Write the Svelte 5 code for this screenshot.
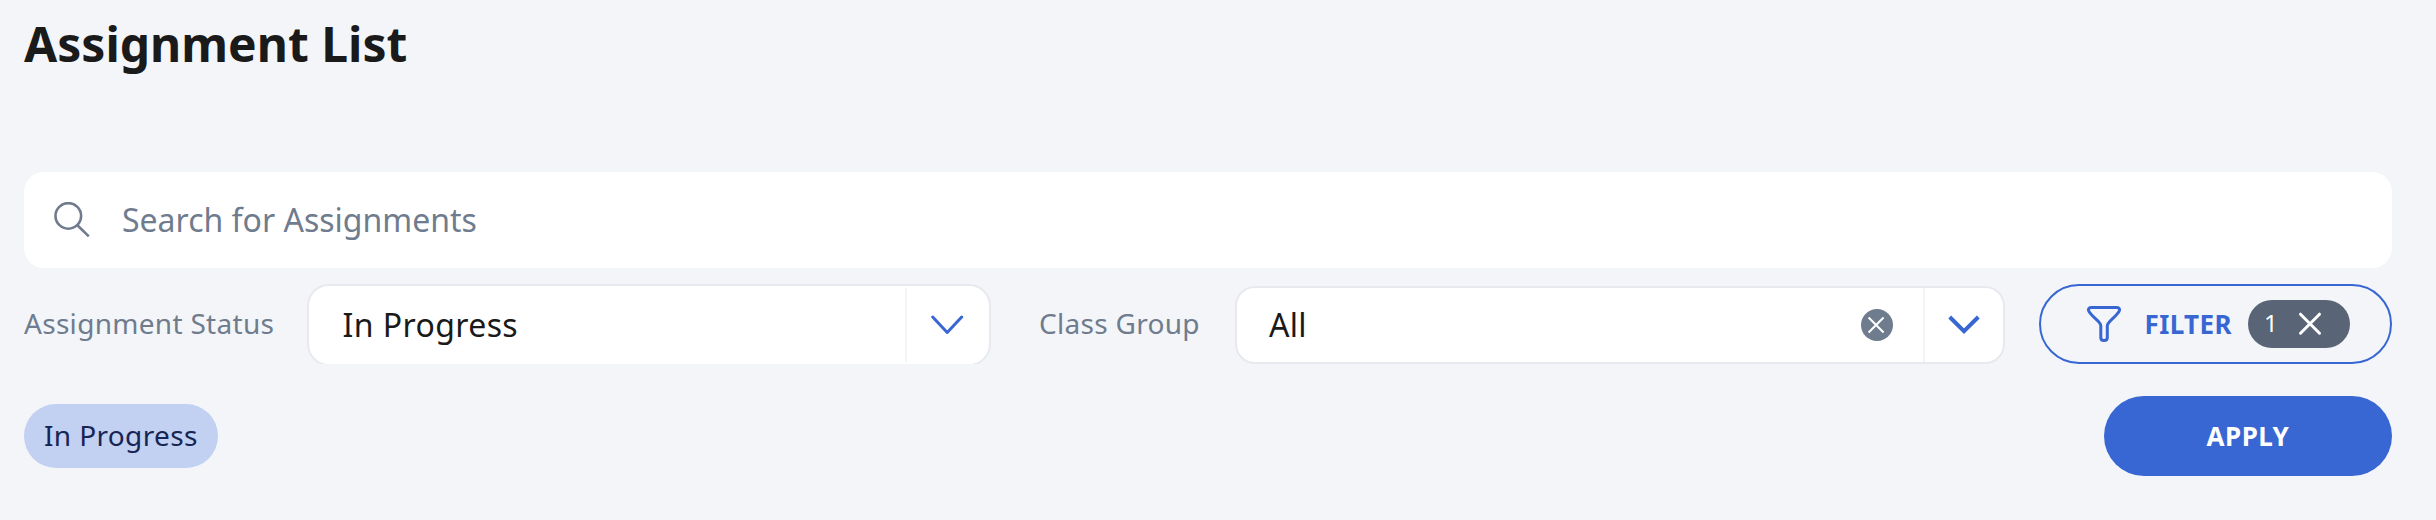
<script>
  let query = $state('');
  const status = 'In Progress';
  const group = 'All';
  const filterCount = 1;
</script>

<main>
  <h1>Assignment List</h1>

  <label class="search">
    <svg width="36" height="36" viewBox="0 0 36 36" fill="none" stroke="#6f7c8e" stroke-width="2.6">
      <circle cx="14.3" cy="13.9" r="12.8" />
      <path d="M23.4 23.2L34.8 34.4" />
    </svg>
    <input bind:value={query} placeholder="Search for Assignments" />
  </label>

  <div class="filters">
    <span class="label status-label">Assignment Status</span>
    <div class="clip">
      <div class="select">
        <span class="value">{status}</span>
        <span class="toggle">
          <svg width="34" height="22" viewBox="0 0 34 22" fill="none" stroke="#3866d2" stroke-width="3" stroke-linecap="round" stroke-linejoin="round">
            <path d="M1.7 3L16.2 18.5L30.7 3" />
          </svg>
        </span>
      </div>
    </div>

    <span class="label group-label">Class Group</span>
    <div class="select group">
      <span class="value">{group}</span>
      <svg class="clear" width="32" height="32" viewBox="0 0 32 32">
        <circle cx="16" cy="16" r="16" fill="#6f7c8e" />
        <path d="M7.6 8.5L22.6 23.5M22.6 8.5L7.6 23.5" stroke="#fff" stroke-width="2" />
      </svg>
      <span class="toggle">
        <svg width="34" height="22" viewBox="0 0 34 22" fill="none" stroke="#3866d2" stroke-width="4">
          <path d="M2.7 3L17 17.2L31.3 3" />
        </svg>
      </span>
    </div>

    <button class="filter">
      <svg width="36" height="38" viewBox="0 0 36 38" fill="none" stroke="#3866d2" stroke-width="3" stroke-linejoin="round">
        <path d="M5 2.600H31C33.300 2.600 34.200 4.200 33.200 6.200C30.500 11.800 21.300 16.500 21.300 20.800V32.500C21.300 36.500 14.800 36.500 14.800 32.500V20.800C14.800 16.500 5.500 11.800 2.800 6.200C1.800 4.200 2.700 2.600 5 2.600Z" />
      </svg>
      <span class="filter-text">FILTER</span>
      <span class="badge">
        <span class="count">{filterCount}</span>
        <svg width="24" height="24" viewBox="0 0 24 24" stroke="#fff" stroke-width="3" stroke-linecap="round">
          <path d="M2.500 2.200L21.500 21.200M21.500 2.200L2.500 21.200" />
        </svg>
      </span>
    </button>
  </div>

  <div class="actions">
    <span class="chip">{status}</span>
    <button class="apply">APPLY</button>
  </div>
</main>

<style>
  :global(body) {
    background: #f3f5f9;
  }
  main {
    box-sizing: border-box;
    width: 2436px;
    height: 520px;
    padding: 11px 44px 0 24px;
    background: #f3f5f9;
    font-family: 'Noto Sans', sans-serif;
    color: #1a1a1a;
  }
  h1 {
    margin: 0 0 96px;
    font-size: 48px;
    line-height: 65px;
    font-weight: 700;
  }
  button,
  input {
    font-family: inherit;
    box-sizing: border-box;
  }
  .search {
    display: flex;
    align-items: center;
    height: 96px;
    padding: 0 30px;
    box-sizing: border-box;
    background: #fff;
    border-radius: 20px;
  }
  .search input {
    flex: 1;
    margin: 0 0 0 32px;
    padding: 0 0 2px;
    border: 0;
    outline: 0;
    background: none;
    font-size: 32px;
  }
  .search input::placeholder {
    color: #6f7c8e;
    opacity: 1;
  }
  .filters {
    display: flex;
    height: 80px;
    margin-top: 16px;
    align-items: center;
  }
  .label {
    flex: none;
    padding-bottom: 2px;
    box-sizing: border-box;
    font-size: 28px;
    line-height: 38px;
    letter-spacing: 0.3px;
    color: #6f7c8e;
    white-space: nowrap;
  }
  .status-label {
    width: 283px;
  }
  .group-label {
    width: 244px;
    padding-left: 48px;
  }
  .clip {
    width: 684px;
    height: 80px;
    overflow: hidden;
  }
  .select {
    display: flex;
    align-items: center;
    box-sizing: border-box;
    height: 82px;
    background: #fff;
    border: 2px solid #e8e9ee;
    border-radius: 22px;
  }
  .value {
    flex: 1;
    padding-left: 33.5px;
    font-size: 32px;
    line-height: 44px;
    letter-spacing: 0.4px;
  }
  .toggle {
    display: flex;
    align-items: center;
    justify-content: center;
    box-sizing: border-box;
    width: 84px;
    height: 74px;
    border-left: 2px solid #f3f4f9;
  }
  .group {
    width: 770px;
    height: 78px;
    margin-top: 2px;
    border-radius: 20px;
  }
  .group .value {
    padding-left: 32px;
    letter-spacing: 0.3px;
  }
  .group .toggle {
    width: 80px;
  }
  .clear {
    margin-right: 30px;
  }
  .filter {
    display: flex;
    align-items: center;
    width: 353px;
    height: 80px;
    margin: 0 0 0 34px;
    padding: 0 0 0 45px;
    background: transparent;
    border: 2px solid #3866d2;
    border-radius: 40px;
    color: #3866d2;
  }
  .filter-text {
    width: 103.5px;
    margin-left: 22.5px;
    text-align: left;
    font-size: 26px;
    font-weight: 700;
    line-height: 36px;
    letter-spacing: 0.4px;
  }
  .badge {
    display: flex;
    align-items: center;
    box-sizing: border-box;
    width: 102px;
    height: 48px;
    padding-left: 16px;
    border-radius: 24px;
    background: #596576;
    color: #fff;
  }
  .count {
    width: 34px;
    padding-bottom: 2px;
    text-align: left;
    font-size: 24px;
    line-height: 32px;
  }
  .actions {
    display: flex;
    justify-content: space-between;
    align-items: center;
    height: 80px;
    margin-top: 32px;
  }
  .chip {
    box-sizing: border-box;
    width: 194px;
    height: 64px;
    padding-left: 20px;
    border-radius: 32px;
    background: #c2d0f2;
    color: #172554;
    font-size: 28px;
    line-height: 62px;
    letter-spacing: 0.35px;
  }
  .apply {
    width: 288px;
    height: 80px;
    padding: 0;
    border: 0;
    border-radius: 40px;
    background: #3866d2;
    color: #fff;
    font-size: 26px;
    font-weight: 700;
    letter-spacing: 0.5px;
  }
</style>
